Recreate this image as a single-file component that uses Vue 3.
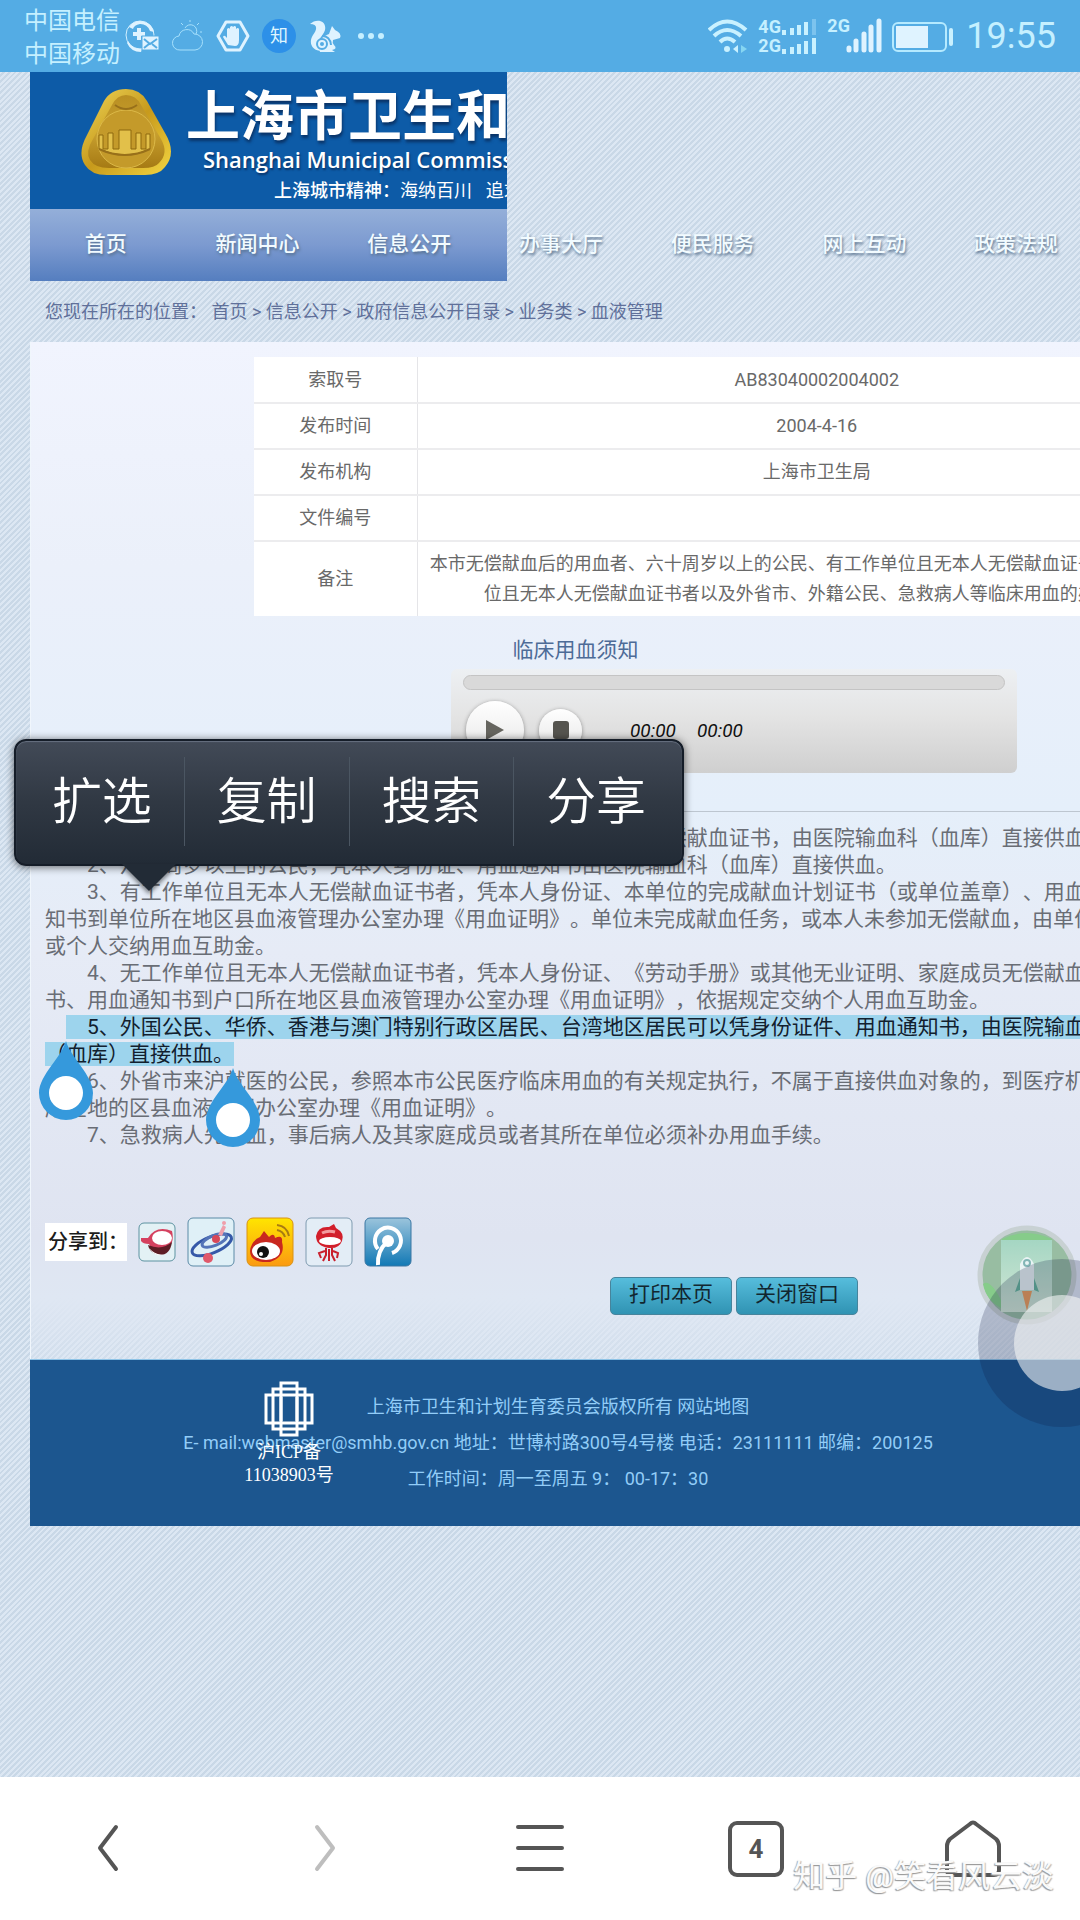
<script setup>
const navItems = ['首页', '新闻中心', '信息公开', '办事大厅', '便民服务', '网上互动', '政策法规']
const crumbs = ['首页', '信息公开', '政府信息公开目录', '业务类', '血液管理']
const rows = [
  ['索取号', 'AB83040002004002'],
  ['发布时间', '2004-4-16'],
  ['发布机构', '上海市卫生局'],
  ['文件编号', ''],
  ['备注', '本市无偿献血后的用血者、六十周岁以上的公民、有工作单位且无本人无偿献血证书者、无工作单位且无本人无偿献血证书者以及外省市、外籍公民、急救病人等临床用血的办理程序'],
]
const before = [
  '1、无偿献血后的用血者，凭本人身份证、用血通知书、本人无偿献血证书，由医院输血科（血库）直接供血。',
  '2、六十周岁以上的公民，凭本人身份证、用血通知书由医院输血科（血库）直接供血。',
  '3、有工作单位且无本人无偿献血证书者，凭本人身份证、本单位的完成献血计划证书（或单位盖章）、用血通知书到单位所在地区县血液管理办公室办理《用血证明》。单位未完成献血任务，或本人未参加无偿献血，由单位或个人交纳用血互助金。',
  '4、无工作单位且无本人无偿献血证书者，凭本人身份证、《劳动手册》或其他无业证明、家庭成员无偿献血证书、用血通知书到户口所在地区县血液管理办公室办理《用血证明》，依据规定交纳个人用血互助金。',
]
const selected = '5、外国公民、华侨、香港与澳门特别行政区居民、台湾地区居民可以凭身份证件、用血通知书，由医院输血科（血库）直接供血。'
const after = [
  '6、外省市来沪就医的公民，参照本市公民医疗临床用血的有关规定执行，不属于直接供血对象的，到医疗机构所在地的区县血液管理办公室办理《用血证明》。',
  '7、急救病人先用血，事后病人及其家庭成员或者其所在单位必须补办用血手续。',
]
const menu = ['扩选', '复制', '搜索', '分享']
</script>

<template>
  <div class="phone" lang="zh-CN">
    <header class="status">
      <div class="carriers"><span>中国电信</span><span>中国移动</span></div>
      <div class="notices">
        <svg width="36" height="34" viewBox="0 0 36 34">
          <circle cx="16" cy="16" r="14" fill="none" stroke="#d3f0ff" stroke-width="1" />
          <path d="M5 8A14 14 0 0 1 30 13L26 12A10 10 0 0 0 16 5Q10 6 9 10ZM4 22Q8 30 18 30L17 33Q7 33 3 24Z" fill="#dff3ff" />
          <path d="M15 9v12M9 15h12" stroke="#dff3ff" stroke-width="4" />
          <rect x="18" y="17" width="17" height="14" fill="#dff3ff" stroke="#54ace4" />
          <path d="M20 20l6 5 7-5M20 29l5-4M33 29l-5-4" fill="none" stroke="#54ace4" stroke-width="2" />
        </svg>
        <svg width="32" height="34" viewBox="0 0 32 34" fill="none" stroke="#a6e0fc" stroke-width="1">
          <path d="M8 31a7 7 0 0 1-1-14a8 8 0 0 1 15-2a8 8 0 0 1 1 16Z" />
          <path d="M13 9a6 6 0 0 1 11 6M18 1v2M9 4l2 2M27 4l-2 2M30 13h-2" />
        </svg>
        <svg width="34" height="34" viewBox="0 0 34 34">
          <path d="M10 3h14l8 14-8 14H10L2 17Z" fill="none" stroke="#dff3ff" stroke-width="3" stroke-linejoin="round" />
          <path d="M12 26L7 18q1-3 4 1V10q2-2 3 0v7V8q2-2 3 0v9V8q2-2 3 0v9l0-7q2-2 3 0v11q0 6-4 6Z" fill="#dff3ff" />
        </svg>
        <span class="zhi">知</span>
        <svg width="34" height="34" viewBox="0 0 34 34">
          <path d="M2 5C8-1 19 1 17 11C15 18 7 21 11 30L14 32C4 32 0 24 5 16C10 9 9 5 2 5Z" fill="#dff3ff" />
          <path d="M24 7l3 4q7 3 5 8l-7 2q-1 3 1 5q4 4-2 5l3 2H12q-4-14 9-18Z" fill="#dff3ff" />
          <circle cx="14" cy="25" r="5" fill="#dff3ff" stroke="#54ace4" stroke-width="2" /><circle cx="14" cy="25" r="2" fill="#54ace4" />
          <path d="M14 17q8 0 9 9" fill="none" stroke="#54ace4" stroke-width="2" />
        </svg>
        <svg width="34" height="34" viewBox="0 0 34 34" fill="#c5efff"><circle cx="7" cy="17" r="3" /><circle cx="17" cy="17" r="3" /><circle cx="27" cy="17" r="3" /></svg>
      </div>
      <div class="signals">
        <svg width="40" height="36" viewBox="0 0 40 36" fill="none" stroke="#c9f1ff" stroke-width="4">
          <path d="M1 12Q19-5 38 12M6 18Q19 6 33 18M12 24Q19 17 27 24" /><circle cx="19" cy="31" r="3" fill="#c9f1ff" stroke="none" />
          <path d="M30 27v8l-5-4Z" fill="#c9f1ff" stroke="none" /><path d="M33 27l6 4-6 4Z" fill="#86d6f2" stroke="none" />
        </svg>
        <div class="dual">
          <div class="net"><b>4G</b>
            <svg width="36" height="16" viewBox="0 0 36 16" stroke="#c9f1ff" stroke-width="4"><path d="M3 16v-5M11 16V9M18 16V6M25 16V3" /><path d="M33 16V0" stroke="#7cc3ee" /></svg>
          </div>
          <div class="net"><b>2G</b>
            <svg width="36" height="16" viewBox="0 0 36 16" stroke="#c9f1ff" stroke-width="4"><path d="M3 16v-5M11 16V9M18 16V6M25 16V3M33 16V0" /></svg>
          </div>
        </div>
        <div class="single"><b>2G</b>
          <svg width="36" height="36" viewBox="0 0 36 36" stroke="#dff3ff" stroke-width="5" stroke-linecap="round"><path d="M3 32v-2M10 32v-9M18 32V16M25 32V9M33 32V3" /></svg>
        </div>
        <svg class="battery" width="62" height="32" viewBox="0 0 62 32"><rect x="1" y="2" width="53" height="28" rx="5" fill="none" stroke="#b5eaff" stroke-width="2" /><rect x="4" y="5" width="32" height="22" fill="#dff3ff" /><rect x="57" y="7" width="4" height="18" rx="2" fill="#c9f1ff" /></svg>
        <time>19:55</time>
      </div>
    </header>

    <main class="web">
      <div class="site-head">
        <div class="banner">
          <svg class="emblem" width="94" height="92" viewBox="0 0 94 92">
            <defs>
              <linearGradient id="gold" x1="0" y1="0" x2="1" y2="1"><stop offset="0" stop-color="#efd75a" /><stop offset=".5" stop-color="#c79a1c" /><stop offset="1" stop-color="#f3d541" /></linearGradient>
              <linearGradient id="goldIn" x1="0" y1="0" x2="0" y2="1"><stop offset="0" stop-color="#b98f22" /><stop offset=".5" stop-color="#c9a130" /><stop offset="1" stop-color="#a67a14" /></linearGradient>
            </defs>
            <path d="M25 14Q32 2 47 2Q61 2 68 14L86 46Q98 66 86 80Q80 88 66 88H28Q12 88 6 78Q-2 66 8 48Z" fill="url(#gold)" />
            <path d="M33 18Q38 8 47 8Q57 8 62 18L82 52Q90 66 80 76Q76 81 64 81H30Q16 81 11 73Q6 65 14 52Z" fill="url(#goldIn)" />
            <circle cx="47" cy="52" r="29" fill="#c49a2a" stroke="#dcb948" stroke-width="1" />
            <path d="M20 62V48h4v14h5V46h5v16h6V43h12v19h5V46h5v16h5V47h4v15q-24 12-51 0Z" fill="#e2c04a" stroke="#8d680f" stroke-width="1" />
            <path d="M36 18q11 8 22 0M20 62q26 12 51 0" stroke="#98701a" stroke-width="2" fill="none" />
          </svg>
          <div class="brand">
            <h1>上海市卫生和计划生育委员会</h1>
            <p class="en">Shanghai Municipal Commission</p>
            <p class="slogan"><b>上海城市精神：</b>海纳百川&ensp; 追求卓越</p>
          </div>
        </div>
        <div class="navbar">
          <nav><a v-for="n in navItems" :key="n" href="#">{{ n }}</a></nav>
        </div>
      </div>

      <p class="crumbs">您现在所在的位置： <template v-for="(c, i) in crumbs" :key="c"><template v-if="i"> &gt; </template><a href="#">{{ c }}</a></template></p>

      <section class="panel">
        <table>
          <tbody>
            <tr v-for="r in rows" :key="r[0]"><th scope="row">{{ r[0] }}</th><td>{{ r[1] }}</td></tr>
          </tbody>
        </table>
        <div class="column">
          <h2>临床用血须知</h2>
          <div class="player">
            <input type="range" min="0" max="100" value="0" aria-label="播放进度">
            <div class="controls">
              <button class="play" aria-label="播放"><svg width="20" height="22" viewBox="0 0 20 22"><path d="M1 1l18 10L1 21Z" fill="#66655f" /></svg></button>
              <button class="stop" aria-label="停止"><svg width="16" height="18" viewBox="0 0 16 18"><rect width="16" height="18" rx="3" fill="#55544f" /></svg></button>
              <i class="elapsed">00:00</i><i>00:00</i>
            </div>
          </div>
          <article>
            <p v-for="t in before" :key="t">　　{{ t }}</p>
            <p>　<mark>　{{ selected }}</mark></p>
            <p v-for="t in after" :key="t">　　{{ t }}</p>
            <svg class="handle start" width="54" height="80" viewBox="0 0 54 80"><path d="M27 0C31 16 54 34 54 52A27 27 0 0 1 0 52C0 34 23 16 27 0Z" fill="#3599dc" /><circle cx="27" cy="52" r="17" fill="#fff" /></svg>
            <svg class="handle end" width="54" height="80" viewBox="0 0 54 80"><path d="M27 0C31 16 54 34 54 52A27 27 0 0 1 0 52C0 34 23 16 27 0Z" fill="#3599dc" /><circle cx="27" cy="52" r="17" fill="#fff" /></svg>
            <div class="popup">
              <button v-for="m in menu" :key="m">{{ m }}</button>
              <svg class="tail" width="54" height="28" viewBox="0 0 54 28"><path d="M0 0H54L27 27Z" fill="#222b36" /></svg>
            </div>
          </article>
          <div class="share">
            <span>分享到：</span>
            <a href="#" aria-label="搜狐"><svg width="38" height="40" viewBox="0 0 38 40"><rect x="1" y="1" width="36" height="38" rx="5" fill="#e3f1f5" stroke="#5d93a0" /><path d="M3 16h7Q18 3 34 9Q37 22 28 27Q14 30 11 22Q5 22 3 19Z" fill="#d5415f" /><ellipse cx="24" cy="16" rx="10" ry="7" fill="#fff" /><path d="M10 23Q24 29 34 20Q32 34 20 33Q11 30 10 23Z" fill="#5d1d25" /><path d="M11 26Q18 34 26 32Q17 36 11 26Z" fill="#fff" /></svg></a>
            <a href="#" aria-label="空间"><svg width="48" height="50" viewBox="0 0 48 50"><rect x="1" y="1" width="46" height="48" rx="5" fill="#dff0f7" stroke="#5b8aa6" /><g fill="none" transform="rotate(-22 24 26)"><ellipse cx="24" cy="28" rx="21" ry="8" stroke="#3558a8" stroke-width="3" /><ellipse cx="28" cy="25" rx="13" ry="5" stroke="#5474b8" stroke-width="3" /></g><path d="M31 18L36 8l3 2-4 9Z" fill="#ef9fab" /><circle cx="37" cy="6" r="2" fill="#ef9fab" /><circle cx="29" cy="22" r="4" fill="#d84858" /><circle cx="21" cy="41" r="5" fill="#e0596b" /></svg></a>
            <a href="#" aria-label="新浪微博"><svg width="48" height="50" viewBox="0 0 48 50"><defs><linearGradient id="wb" x1="0" y1="0" x2="0" y2="1"><stop offset="0" stop-color="#ffe500" /><stop offset="1" stop-color="#fb9a12" /></linearGradient></defs><rect x="1" y="1" width="46" height="48" rx="6" fill="url(#wb)" stroke="#d99213" /><path d="M4 34Q5 24 14 20l4-6 5 6q5-5 6 1q8-4 7 4q4 15-12 20Q4 46 4 34Z" fill="#c9281f" /><ellipse cx="20" cy="34" rx="14" ry="9" fill="#fff" /><circle cx="17" cy="35" r="6" fill="#111" /><circle cx="15" cy="37" r="2" fill="#fff" /><path d="M31 8q10 1 12 11M31 13q6 1 8 7" fill="none" stroke="#a87b12" stroke-width="2" /></svg></a>
            <a href="#" aria-label="人民网"><svg width="48" height="50" viewBox="0 0 48 50"><rect x="1" y="1" width="46" height="48" rx="5" fill="#e3edf6" stroke="#7f9bb0" /><path d="M11 19Q13 9 24 10l5-3 2 4Q40 16 37 24Q34 32 24 31Q11 29 11 19Z" fill="#d21f2b" /><ellipse cx="25" cy="24" rx="11" ry="4" fill="#fff" /><path d="M17 16q6-3 13-1" stroke="#f39a9d" stroke-width="3" fill="none" /><path d="M21 31v7l-3 6M27 31v7l3 6M24 32v12M20 34l-6 2 2 5M28 34l5 2-1 5" stroke="#c91f2c" stroke-width="2" fill="none" /></svg></a>
            <a href="#" aria-label="腾讯微博"><svg width="48" height="50" viewBox="0 0 48 50"><defs><linearGradient id="tx" x1="0" y1="0" x2="0" y2="1"><stop offset="0" stop-color="#9bc4dc" /><stop offset="1" stop-color="#1279b5" /></linearGradient></defs><rect x="1" y="1" width="46" height="48" rx="5" fill="url(#tx)" stroke="#3b77a3" /><path d="M14 32A13 13 0 1 1 28 36" fill="none" stroke="#fff" stroke-width="4" /><circle cx="24" cy="24" r="6" fill="#fff" /><path d="M23 25Q13 34 14 48" fill="none" stroke="#fff" stroke-width="4" /></svg></a>
          </div>
        </div>
        <div class="actions"><button>打印本页</button><button>关闭窗口</button></div>
      </section>

      <footer>
        <p>上海市卫生和计划生育委员会版权所有 <a href="#">网站地图</a></p>
        <p>E- mail:webmaster@smhb.gov.cn 地址：世博村路300号4号楼 电话：23111111 邮编：200125</p>
        <p>工作时间：周一至周五 9： 00-17：30</p>
        <a class="icp" href="#">
          <svg width="50" height="56" viewBox="0 0 50 56" fill="none" stroke="#fff" stroke-width="3"><rect x="2" y="14" width="46" height="28" /><rect x="9" y="8" width="32" height="40" /><rect x="17" y="2" width="16" height="52" /><path d="M17 16v24M33 16v24" /></svg>
          <span>沪ICP备</span><span>11038903号</span>
        </a>
      </footer>

      <svg class="floaters" width="104" height="204" viewBox="0 0 104 204">
        <defs><linearGradient id="sky" x1="0" y1="0" x2="0" y2="1"><stop offset="0" stop-color="#a5d6c3" /><stop offset="1" stop-color="#d2e7d5" /></linearGradient></defs>
        <circle cx="51" cy="51" r="47" fill="#98bda2" stroke="#c8d1d3" stroke-width="5" />
        <path d="M26 15Q50 3 76 15V22H26ZM7 60Q14 54 26 78L25 84Q10 76 7 60Z" fill="#86cc8a" />
        <rect x="25" y="16" width="51" height="72" fill="url(#sky)" />
        <path d="M44 66V40q7-14 14 0v26Z" fill="#e9f4f4" /><circle cx="51" cy="39" r="3" fill="none" stroke="#82b5b5" stroke-width="2" />
        <path d="M44 54l-5 14 5-2M58 54l5 14-5-2" fill="#67b49b" /><path d="M46 67h10l-5 20Z" fill="#eb9e5b" />
        <circle cx="86" cy="119" r="84" fill="#0d1640" fill-opacity=".22" />
        <circle cx="86" cy="119" r="48" fill="#f3f5f5" fill-opacity=".6" />
      </svg>
    </main>

    <footer class="toolbar">
      <button aria-label="后退"><svg width="56" height="60" viewBox="0 0 56 60" fill="none" stroke="#555" stroke-width="4" stroke-linecap="round" stroke-linejoin="round"><path d="M36 8L20 29l16 21" /></svg></button>
      <button aria-label="前进"><svg width="56" height="60" viewBox="0 0 56 60" fill="none" stroke="#bebebe" stroke-width="4" stroke-linecap="round" stroke-linejoin="round"><path d="M21 8l16 21-16 21" /></svg></button>
      <button aria-label="菜单"><svg width="56" height="60" viewBox="0 0 56 60" stroke="#555" stroke-width="4" stroke-linecap="round"><path d="M6 8h44M6 29h44M6 50h44" /></svg></button>
      <button aria-label="标签页"><span class="tabs">4</span></button>
      <button aria-label="主页"><svg width="60" height="60" viewBox="0 0 60 60" fill="none" stroke="#555" stroke-width="4" stroke-linejoin="round"><path d="M28 5Q31 2 34 5L54 20Q57 23 57 27V51Q57 56 52 56H10Q5 56 5 51V27Q5 23 8 20Z" /></svg></button>
      <span class="watermark">知乎 @笑看风云淡</span>
    </footer>
  </div>
</template>

<style>
body { margin: 0; }
</style>

<style scoped>
* { box-sizing: border-box; }
p, h1, h2 { margin: 0; font-weight: 400; }
a { color: inherit; text-decoration: none; }
svg { display: block; flex: none; }
button { padding: 0; border: 0; background: none; font-family: inherit; }
.phone {
  display: flex; flex-direction: column; min-height: 100vh; overflow: hidden;
  font-family: Roboto, "Noto Sans CJK SC", sans-serif; font-size: 18px; text-spacing-trim: space-all;
}
.status { height: 72px; padding: 0 24px; display: flex; align-items: center; background: #54ace4; color: #c5f0ff; }
.carriers { display: flex; flex-direction: column; padding-top: 3px; font-size: 24px; line-height: 33px; white-space: nowrap; }
.notices { display: flex; align-items: center; gap: 12px; margin-left: 4px; }
.zhi { width: 34px; height: 34px; border-radius: 50%; background: #2d90e8; color: #dff6ff; font-size: 18px; line-height: 33px; text-align: center; }
.signals { margin-left: auto; display: flex; align-items: center; gap: 10px; }
.signals b { font-family: "Liberation Sans Narrow", "Roboto", sans-serif; font-size: 18px; line-height: 16px; width: 21px; }
.dual { display: flex; flex-direction: column; gap: 3px; }
.net { display: flex; gap: 2px; }
.single { display: flex; }
.single svg { margin-left: -2px; }
.battery { margin-top: 2px; }
time { margin-left: 2px; font-size: 36px; line-height: 40px; }

.web {
  position: relative; flex: 1; padding-left: 30px; overflow: hidden;
  background: repeating-linear-gradient(135deg, #dce7f3 0 2px, #c9d8e7 2px 4px);
}
.site-head { color: #fff; }
.banner { display: flex; width: 477px; height: 137px; overflow: hidden; background: #0d5ba7; }
.emblem { margin: 15px 0 0 49px; }
.brand { margin-left: 13px; white-space: nowrap; }
h1 { margin-top: 19px; font-size: 54px; line-height: 54px; font-weight: 700; text-shadow: 1px 3px 3px #0a3468; }
.en { margin-left: 17px; font-family: "Open Sans", sans-serif; font-size: 22px; font-weight: 600; line-height: 28px; text-shadow: 1px 2px 2px #0a3468; }
.slogan { margin-left: 88px; line-height: 36px; }
.slogan b { font-weight: 500; }
.navbar { width: 477px; height: 72px; background: linear-gradient(#94afd9, #7c9ad0 50%, #557ebf); }
nav { display: grid; grid-template-columns: repeat(7, 1fr); width: 1062px; line-height: 70px; font-size: 21px; font-weight: 500; text-align: center; text-shadow: 1px 2px 3px #556f8c; color: #f2fbff; }
.crumbs { padding-left: 15px; line-height: 61px; color: #60709a; white-space: nowrap; }

.panel {
  position: relative; width: 1200px; padding-top: 15px; border-left: 1px solid #f0f6fc; color: #696d75;
  background: linear-gradient(#f1f4fe, #ebf0fa 22%, #e5effa 46%, #e6ebf6 60%, #dfe4f1 88%, #dfe7f3 94%, #dfe7f360);
}
table { width: 962px; margin-left: 223px; border-collapse: collapse; background: #fff; color: #696969; table-layout: fixed; }
th, td { height: 46px; padding: 7px 12px; font-weight: 400; line-height: 30px; text-align: center; border-bottom: 2px solid #ececee; }
th { width: 163px; border-right: 1px solid #e5e5e8; }
tr:last-child > * { border-bottom: 0; }
.column { width: 1065px; margin-left: 14px; }
h2 { padding: 18px 4px 0 0; text-align: center; font-size: 21px; line-height: 32px; color: #4d6b97; }
.player { width: 566px; height: 104px; margin: 3px 0 38px 406px; padding: 6px 12px; border-radius: 6px; background: linear-gradient(#edf0f3, #e4e4e4 45%, #cfcfcf); }
.player input { display: block; width: 542px; height: 15px; margin: 0; appearance: none; border-radius: 8px; background: #d9d9d9; border: 1px solid #c4c4c4; }
.player input::-webkit-slider-thumb { appearance: none; width: 0; height: 0; }
.controls { display: flex; align-items: center; margin-top: 11px; gap: 15px; color: #111; font-size: 19px; }
.controls button { display: flex; align-items: center; justify-content: center; border-radius: 50%; background: linear-gradient(#fff, #e5e5e5); box-shadow: 0 1px 4px #888; }
.play { width: 58px; height: 58px; margin-left: 3px; }
.stop { width: 43px; height: 43px; }
.elapsed { margin: 0 6px 0 33px; }
article { position: relative; padding-top: 13px; border-top: 1px solid #bdc6d0; font-size: 21px; line-height: 27px; }
mark { background: #9dd4ed; color: #12202e; }
.handle { position: absolute; }
.start { left: -6px; top: 229px; }
.end { left: 161px; top: 256px; }
.popup {
  position: absolute; left: -31px; top: -73px; display: flex; width: 670px; height: 127px; padding: 16px 4px 18px;
  border: 2px solid #151d28; border-radius: 12px; background: linear-gradient(#424a57, #303843 50%, #222b36); box-shadow: 0 1px 8px #0009, inset 0 1px 1px #687181;
}
.popup button { flex: 1; color: #fff; font-size: 50px; line-height: 88px; font-weight: 350; }
.popup button + button { border-left: 1px solid #4b5662; }
.tail { position: absolute; left: 106px; top: 123px; filter: drop-shadow(0 3px 2px #0007); }
.share { display: flex; align-items: center; gap: 11px; margin-top: 68px; }
.share span { width: 82px; padding-left: 3px; background: #fff; color: #1b1b1b; font-size: 20px; line-height: 38px; font-weight: 500; white-space: nowrap; }
.actions { display: flex; gap: 4px; padding: 10px 0 44px 579px; }
.actions button { width: 122px; height: 38px; border: 1px solid #47849c; border-radius: 5px; background: linear-gradient(#56bddc, #3093b3); color: #12262f; font-size: 21px; line-height: 32px; padding-bottom: 4px; }
.web > footer { position: relative; width: 1200px; height: 167px; padding: 29px 144px 0 0; background: #1c568f; border-top: 1px solid #8ec3e6; color: #92cdf8; line-height: 36px; text-align: center; }
.icp { position: absolute; left: 204px; top: 21px; width: 110px; display: flex; flex-direction: column; align-items: center; color: #fff; font-family: "Liberation Serif", "Noto Sans CJK SC", serif; line-height: 23px; }
.icp svg { margin-bottom: 4px; }
.floaters { position: absolute; right: 0; top: 1152px; }

.toolbar { position: relative; display: flex; height: 143px; background: #fff; align-items: center; }
.toolbar button { flex: 1; display: flex; justify-content: center; }
.tabs { width: 56px; height: 56px; border: 4px solid #555; border-radius: 9px; color: #555; font: 700 26px/48px "Liberation Sans Narrow", Roboto, sans-serif; text-align: center; }
.watermark { position: absolute; right: 26px; top: 78px; font-size: 32px; line-height: 42px; color: #fafafa; text-shadow: -1px 1px 1px #999, 1px 1px 1px #bbb; white-space: nowrap; }
</style>
